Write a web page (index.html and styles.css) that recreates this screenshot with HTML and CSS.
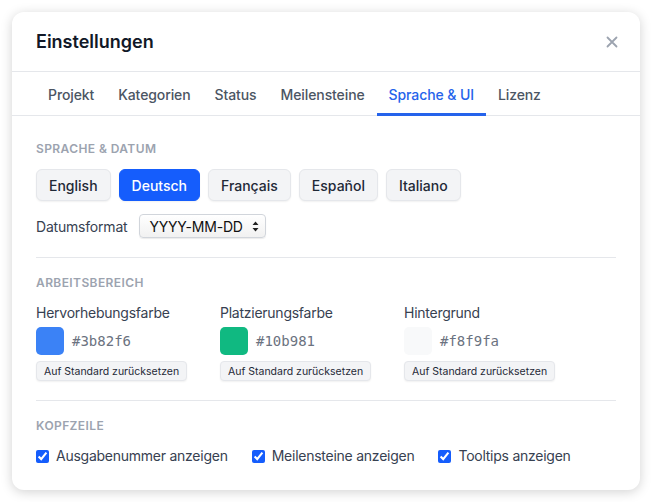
FILE: index.html
```html
<!DOCTYPE html>
<html lang="de">

<head>
  <meta charset="UTF-8">
  <meta name="viewport" content="width=device-width, initial-scale=1.0">
  <title>Einstellungen</title>
  <link rel="stylesheet" href="styles.css">
</head>

<body>
  <div class="modal">
    <div class="modal-header">
      <h2>Einstellungen</h2>
      <button class="close-btn" title="Schließen">
        <svg width="12" height="12" viewBox="0 0 12 12">
          <path d="M1.5 1.5 L10.5 10.5 M10.5 1.5 L1.5 10.5" stroke="#9ca3af" stroke-width="1.8" stroke-linecap="round" />
        </svg>
      </button>
    </div>

    <div class="tabs">
      <div class="tab">Projekt</div>
      <div class="tab">Kategorien</div>
      <div class="tab">Status</div>
      <div class="tab">Meilensteine</div>
      <div class="tab active">Sprache &amp; UI</div>
      <div class="tab">Lizenz</div>
    </div>

    <div class="modal-body">
      <div class="section">
        <div class="section-title">Sprache &amp; Datum</div>
        <div class="lang-buttons">
          <button class="lang-btn">English</button>
          <button class="lang-btn active">Deutsch</button>
          <button class="lang-btn">Français</button>
          <button class="lang-btn">Español</button>
          <button class="lang-btn">Italiano</button>
        </div>
        <div class="date-row">
          <label>Datumsformat</label>
          <div class="select">
            <span>YYYY-MM-DD</span>
            <svg width="7" height="11" viewBox="0 0 7 11">
              <path d="M3.5 0.5 L6.5 4 L0.5 4 Z M3.5 10.5 L6.5 7 L0.5 7 Z" fill="#222" />
            </svg>
          </div>
        </div>
      </div>

      <div class="section">
        <div class="section-title">Arbeitsbereich</div>
        <div class="color-grid">
          <div class="color-item">
            <div class="color-label">Hervorhebungsfarbe</div>
            <div class="color-row">
              <div class="swatch" style="background: #3b82f6"></div>
              <span class="hex">#3b82f6</span>
            </div>
            <button class="reset-btn">Auf Standard zurücksetzen</button>
          </div>
          <div class="color-item">
            <div class="color-label">Platzierungsfarbe</div>
            <div class="color-row">
              <div class="swatch" style="background: #10b981"></div>
              <span class="hex">#10b981</span>
            </div>
            <button class="reset-btn">Auf Standard zurücksetzen</button>
          </div>
          <div class="color-item">
            <div class="color-label">Hintergrund</div>
            <div class="color-row">
              <div class="swatch" style="background: #f8f9fa"></div>
              <span class="hex">#f8f9fa</span>
            </div>
            <button class="reset-btn">Auf Standard zurücksetzen</button>
          </div>
        </div>
      </div>

      <div class="section last">
        <div class="section-title">Kopfzeile</div>
        <div class="checks">
          <label class="check"><input type="checkbox" checked> Ausgabenummer anzeigen</label>
          <label class="check"><input type="checkbox" checked> Meilensteine anzeigen</label>
          <label class="check"><input type="checkbox" checked> Tooltips anzeigen</label>
        </div>
      </div>
    </div>
  </div>
</body>

</html>
```

FILE: styles.css
```css
body,
html {
  margin: 0;
  padding: 0;
  background-color: #ffffff;
  font-family: Inter, "Noto Sans", sans-serif;
  color: #1f2937;
}

body {
  padding: 12px;
}

.modal {
  width: 628px;
  background-color: #ffffff;
  border-radius: 12px;
  box-shadow: 0 2px 12px rgba(0, 0, 0, 0.18);
  overflow: hidden;
}

.modal-header {
  display: flex;
  align-items: center;
  justify-content: space-between;
  height: 59px;
  padding: 0 24px;
  border-bottom: 1px solid #e5e7eb;
}

.modal-header h2 {
  margin: 0;
  font-size: 18px;
  font-weight: 600;
  color: #111827;
}

.close-btn {
  display: flex;
  padding: 0;
  margin-right: -2px;
  background: none;
  border: none;
  cursor: pointer;
}

.tabs {
  display: flex;
  padding: 0 24px;
  border-bottom: 1px solid #e5e7eb;
}

.tab {
  padding: 13px 12px 8px;
  font-size: 14px;
  font-weight: 500;
  line-height: 20px;
  letter-spacing: -0.1px;
  color: #4b5563;
  border-bottom: 3px solid transparent;
  margin-bottom: -1px;
}

.tab.active {
  color: #2563eb;
  border-bottom-color: #2563eb;
}

.modal-body {
  padding: 8px 24px 0;
}

.section {
  padding: 17px 0 19px;
  border-bottom: 1px solid #e5e7eb;
}

.section.last {
  border-bottom: none;
  padding-bottom: 24px;
}

.section-title {
  font-size: 12px;
  font-weight: 600;
  line-height: 16px;
  letter-spacing: 0.4px;
  text-transform: uppercase;
  color: #9ca3af;
  margin-bottom: 12px;
}

.lang-buttons {
  display: flex;
  gap: 8px;
}

.lang-btn {
  height: 32px;
  padding: 0 12px;
  font-family: inherit;
  font-size: 14px;
  font-weight: 500;
  color: #1f2937;
  background-color: #f3f4f6;
  border: 1px solid #e5e7eb;
  border-radius: 6px;
  box-shadow: 0 1px 2px rgba(0, 0, 0, 0.06);
}

.lang-btn.active {
  color: #ffffff;
  background-color: #155dfc;
  border-color: #155dfc;
}

.date-row {
  display: flex;
  align-items: center;
  gap: 12px;
  margin-top: 13px;
  font-size: 14px;
  letter-spacing: -0.2px;
  color: #374151;
}

.select {
  display: flex;
  align-items: center;
  gap: 9px;
  height: 22px;
  padding: 0 6px 0 9px;
  background: linear-gradient(#ffffff, #f1f1f1);
  border: 1px solid #d1d5db;
  border-radius: 4px;
  box-shadow: 0 1px 1px rgba(0, 0, 0, 0.08);
  color: #111111;
}

.color-grid {
  display: grid;
  grid-template-columns: repeat(3, 160px);
  column-gap: 24px;
}

.color-item {
  display: flex;
  flex-direction: column;
  align-items: flex-start;
}

.color-label {
  font-size: 14px;
  line-height: 20px;
  letter-spacing: -0.25px;
  color: #374151;
  margin-bottom: 4px;
}

.color-row {
  display: flex;
  align-items: center;
  gap: 8px;
  margin-bottom: 6px;
}

.swatch {
  width: 28px;
  height: 28px;
  border-radius: 5px;
}

.hex {
  font-family: "DejaVu Sans Mono", monospace;
  font-size: 14px;
  color: #6b7280;
}

.reset-btn {
  height: 20px;
  padding: 0 7px;
  font-family: inherit;
  font-size: 10.5px;
  color: #1f2937;
  background-color: #f3f4f6;
  border: 1px solid #e5e7eb;
  border-radius: 4px;
  box-shadow: 0 1px 2px rgba(0, 0, 0, 0.06);
}

.checks {
  display: flex;
  gap: 24px;
}

.check {
  display: flex;
  align-items: center;
  gap: 7px;
  font-size: 14px;
  line-height: 20px;
  letter-spacing: -0.25px;
  color: #374151;
}

.check input {
  margin: 0;
  width: 13px;
  height: 13px;
  accent-color: #155dfc;
}
```
